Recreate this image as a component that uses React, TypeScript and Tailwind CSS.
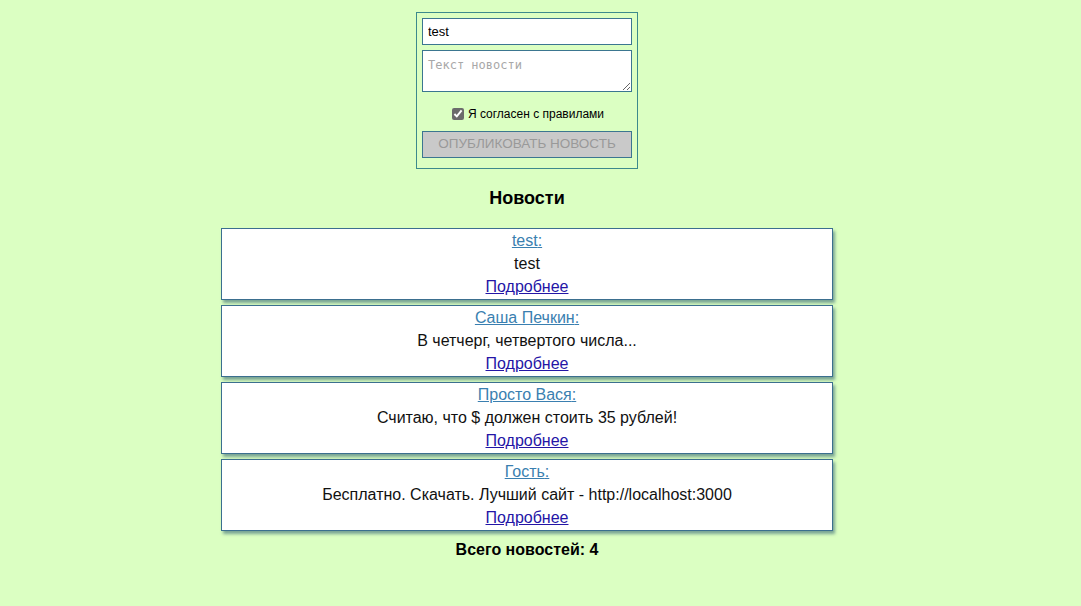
import React from 'react';

interface NewsItem {
  author: string;
  text: string;
}

const news: NewsItem[] = [
  { author: 'test', text: 'test' },
  { author: 'Саша Печкин', text: 'В четчерг, четвертого числа...' },
  { author: 'Просто Вася', text: 'Считаю, что $ должен стоить 35 рублей!' },
  { author: 'Гость', text: 'Бесплатно. Скачать. Лучший сайт - http://localhost:3000' },
];

function AddForm() {
  return (
    <form className="mt-3 w-[222px] border border-[#3c8a8c] px-[5px] pt-[5px] pb-[10px] flex flex-col">
      <input
        className="h-[27px] w-full bg-white border border-[#3b7690] px-[5px] text-[13px] text-black outline-none"
        defaultValue="test"
      />
      <textarea
        className="mt-[5px] h-[42px] w-full bg-white border border-[#3b7690] px-[5px] pt-[7px] text-[12px] leading-[14px] font-['DejaVu_Sans_Mono',monospace] placeholder:text-[#a8a8a8] resize-y outline-none"
        placeholder="Текст новости"
      />
      <label className="mt-[13px] flex items-center justify-center gap-[4px] pl-[2px] text-[12px] text-black">
        <input type="checkbox" defaultChecked className="h-[12px] w-[12px] accent-[#6b6b6b]" />
        Я согласен с правилами
      </label>
      <button
        type="button"
        disabled
        className="mt-[8px] h-[27px] w-full bg-[#c9c9c9] border border-[#3b7690] text-[13.5px] text-[#999999] uppercase"
      >
        Опубликовать новость
      </button>
    </form>
  );
}

function Article({ item }: { item: NewsItem }) {
  return (
    <div className="h-[72px] w-[612px] pb-[2px] bg-white border border-[#3b6f8f] shadow-[2px_3px_3px_rgba(40,90,110,0.55)] flex flex-col items-center justify-center text-[16px] leading-[23px]">
      <a href="#" className="text-[#3a7fb0] underline">{item.author}:</a>
      <p className="text-[#111]">{item.text}</p>
      <a href="#" className="text-[#2415a6] underline">Подробнее</a>
    </div>
  );
}

export default function App() {
  return (
    <div className="min-h-[606px] w-full bg-[#dbffc2] font-['Liberation_Sans',Arial,sans-serif]">
      <div className="w-[1054px] flex flex-col items-center">
        <AddForm />
        <h2 className="mt-[18px] text-[18px] font-bold text-black leading-[22px]">Новости</h2>
        <div className="mt-[19px] flex flex-col gap-[5px]">
          {news.map((item) => (
            <Article key={item.author} item={item} />
          ))}
        </div>
        <strong className="mt-[9px] text-[16px] leading-[20px] text-black">
          Всего новостей: {news.length}
        </strong>
      </div>
    </div>
  );
}
